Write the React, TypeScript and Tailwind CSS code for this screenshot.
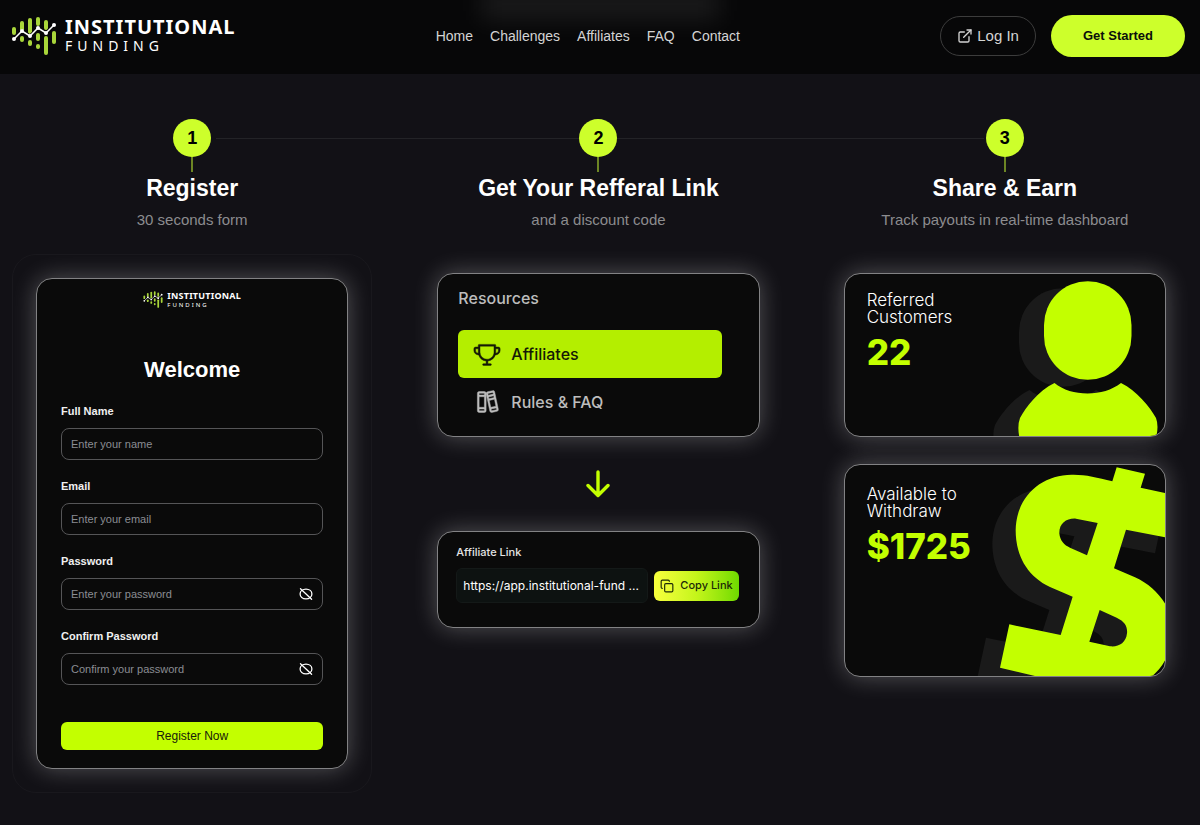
import { useState } from "react";
import type { ReactNode } from "react";
import { Copy, ExternalLink } from "lucide-react";
import { PiBooks, PiTrophy } from "react-icons/pi";
import { cx } from "class-variance-authority";

const navLinks = ["Home", "Challenges", "Affiliates", "FAQ", "Contact"];

const fields = [
  { id: "full-name", label: "Full Name", placeholder: "Enter your name", type: "text" },
  { id: "email", label: "Email", placeholder: "Enter your email", type: "email" },
  { id: "password", label: "Password", placeholder: "Enter your password", type: "password" },
  { id: "confirm-password", label: "Confirm Password", placeholder: "Confirm your password", type: "password" },
];

const bars = [
  { x: 3, y1: 14, y2: 18 },
  { x: 11, y1: 8, y2: 15 },
  { x: 11, y1: 23, y2: 25 },
  { x: 19, y1: 5, y2: 17 },
  { x: 19, y1: 27, y2: 29 },
  { x: 27, y1: 4, y2: 9 },
  { x: 27, y1: 20, y2: 24 },
  { x: 27, y1: 31, y2: 32 },
  { x: 35, y1: 7, y2: 13 },
  { x: 35, y1: 23, y2: 38 },
  { x: 43, y1: 18, y2: 27 },
];

const chart = [
  [3, 24],
  [11, 16],
  [19, 21],
  [27, 13],
  [35, 18],
  [43, 10],
];

function LogoMark({ className }: { className: string }) {
  return (
    <svg viewBox="0 0 46 42" className={className} fill="none" aria-hidden>
      {bars.map((b, i) => (
        <line key={i} x1={b.x} x2={b.x} y1={b.y1} y2={b.y2} stroke="#a9d63a" strokeWidth="4" strokeLinecap="round" />
      ))}
      <polyline points={chart.map((p) => p.join(",")).join(" ")} stroke="#0a0a0a" strokeWidth="3" />
      <polyline points={chart.map((p) => p.join(",")).join(" ")} stroke="#fff" strokeWidth="1.5" />
      {chart.map(([x, y]) => (
        <circle key={x} cx={x} cy={y} r="2" fill="#fff" />
      ))}
    </svg>
  );
}

function Logo({ small = false }: { small?: boolean }) {
  return (
    <a href="#" className={cx("flex items-center font-['Noto_Sans',sans-serif] text-white", small ? "gap-1" : "gap-2")}>
      <LogoMark className={small ? "h-[19px] w-5" : "h-[42px] w-[46px]"} />
      <span className="flex flex-col">
        <span
          className={cx(
            "font-bold",
            small ? "text-[9px] leading-[10px] tracking-wide" : "text-[20px] leading-[20px] tracking-wider",
          )}
        >
          INSTITUTIONAL
        </span>
        <span className={cx(small ? "text-[6px] leading-[8px] tracking-[2px]" : "text-[14px] leading-[18px] tracking-[5px]")}>
          FUNDING
        </span>
      </span>
    </a>
  );
}

function Header() {
  return (
    <header className="relative flex h-[74px] items-center justify-between overflow-hidden bg-[#070708] pb-0.5 pl-[11px] pr-[15px]">
      <div className="absolute -top-3 left-[40%] h-8 w-1/5 bg-white/8 blur-md" aria-hidden />
      <Logo />
      <nav className="relative flex gap-[17px] text-[14px] text-[#d4d4d4]">
        {navLinks.map((label) => (
          <a key={label} href="#">
            {label}
          </a>
        ))}
      </nav>
      <div className="flex items-center gap-[15px]">
        <a
          href="#"
          className="flex h-10 items-center gap-1 rounded-full border border-[#3c3c3c] px-4 text-[15px] text-[#d4d4d4]"
        >
          <ExternalLink className="h-4 w-4" strokeWidth={2} />
          Log In
        </a>
        <a href="#" className="flex h-[42px] items-center rounded-full bg-[#cdff2b] px-8 text-[13px] font-bold text-[#0a0f0a]">
          Get Started
        </a>
      </div>
    </header>
  );
}

function Step({ n, title, text, children }: { n: number; title: string; text: string; children: ReactNode }) {
  return (
    <section className="flex flex-col items-center">
      <span className="relative grid h-[38px] w-[38px] place-items-center rounded-full bg-[#cdff2b] text-[18px] font-bold text-black">
        {n}
      </span>
      <span className="h-[15px] w-0.5 bg-[#6d8624]" />
      <h2 className="text-[23px] font-bold leading-8 text-white">{title}</h2>
      <p className="mt-1 text-[15px] leading-6 text-[#8c8c8f]">{text}</p>
      {children}
    </section>
  );
}

function Panel({ className, children }: { className?: string; children: ReactNode }) {
  return (
    <div
      className={cx(
        "relative w-full overflow-hidden rounded-2xl border border-[#828284] bg-[#0a0a0a] shadow-[0_0_24px_rgba(255,255,255,0.28)]",
        className,
      )}
    >
      {children}
    </div>
  );
}

function HiddenIcon() {
  return (
    <svg viewBox="0 0 14 12" className="h-3 w-3.5" fill="none" stroke="currentColor" strokeWidth="1.3" strokeLinecap="round">
      <path d="M7 1.2c3.4 0 5.9 2.1 5.9 4.8s-2.5 4.8-5.9 4.8S1.1 8.7 1.1 6 3.6 1.2 7 1.2Z" />
      <path d="M1.5.8 12.6 11.2" />
    </svg>
  );
}

function RegisterForm() {
  const [visible, setVisible] = useState<Record<string, boolean>>({});

  return (
    <form className="flex flex-col px-6 pb-[18px] pt-[11px]" onSubmit={(e) => e.preventDefault()}>
      <div className="flex justify-center">
        <Logo small />
      </div>
      <h3 className="mt-[45px] text-center text-[22px] font-bold leading-8 text-white">Welcome</h3>
      <div className="mt-[17px] flex flex-col gap-[18px]">
        {fields.map((f) => (
          <div key={f.id}>
            <label htmlFor={f.id} className="block text-[11px] font-bold leading-4 text-[#f0f0f0]">
              {f.label}
            </label>
            <div className="relative mt-[9px]">
              <input
                id={f.id}
                type={visible[f.id] ? "text" : f.type}
                placeholder={f.placeholder}
                className="block h-8 w-full rounded-lg border border-[#555557] bg-transparent px-[9px] text-[11px] text-white placeholder:text-[#8b8d93]"
              />
              {f.type === "password" && (
                <button
                  type="button"
                  aria-label={`Show ${f.label}`}
                  onClick={() => setVisible({ ...visible, [f.id]: !visible[f.id] })}
                  className="absolute inset-y-0 right-2.5 text-white"
                >
                  <HiddenIcon />
                </button>
              )}
            </div>
          </div>
        ))}
      </div>
      <button type="submit" className="mt-[37px] h-7 rounded-md bg-[#c3ff00] text-[12px] text-[#17200a]">
        Register Now
      </button>
    </form>
  );
}

function Resources() {
  return (
    <Panel className="font-[Inter,sans-serif]">
      <div className="pb-2.5 pl-5 pr-[37px] pt-3 text-[16px] font-medium text-[#bdbdbd]">
        <h3 className="leading-6">Resources</h3>
        <a href="#" className="mt-5 flex h-12 items-center gap-2.5 rounded-md bg-[#b4ee00] pl-[15px] text-[#141a06]">
          <PiTrophy className="h-7 w-7 stroke-current stroke-4" />
          Affiliates
        </a>
        <a href="#" className="flex h-12 items-center gap-2.5 pl-[15px]">
          <PiBooks className="h-7 w-7 stroke-current stroke-4" />
          Rules &amp; FAQ
        </a>
      </div>
    </Panel>
  );
}

function AffiliateLink() {
  return (
    <Panel className="font-[Inter,sans-serif]">
      <div className="pb-6 pl-[18px] pr-5 pt-3">
        <label htmlFor="affiliate-link" className="block text-[11px] font-medium leading-4 text-[#e4e4e4]">
          Affiliate Link
        </label>
        <div className="mt-2 flex items-center gap-1.5">
          <input
            id="affiliate-link"
            readOnly
            value="https://app.institutional-fund ..."
            className="h-[35px] min-w-0 flex-1 rounded-md border border-[#141918] bg-[#0d1211] px-1.5 text-[12px] text-white"
          />
          <button
            type="button"
            className="flex h-[30px] items-center gap-1.5 rounded-md bg-linear-to-r from-[#f8ff3c] via-[#c4f51a] to-[#6edb00] px-1.5 text-[11px] font-medium text-[#1c2a08]"
          >
            <Copy className="h-3.5 w-3.5" />
            Copy Link
          </button>
        </div>
      </div>
    </Panel>
  );
}

const headPath = "M1044 325a43.75 43.75 0 0 1 87.5 0v11a43.75 43.75 0 0 1-87.5 0Z";
const bodyPath =
  "M1054.5 383C1063 390 1075 393.5 1087.5 393.5S1112 390 1121 383C1137 391 1150 407 1156 418Q1159 426 1156 438H1019.5Q1017 426 1020 418C1026 407 1038 391 1054.5 383Z";

function PersonArt() {
  return (
    <svg viewBox="986 273 180 164" className="absolute -right-px -top-px h-[164px] w-[180px]" aria-hidden>
      <g fill="#1a1a1a" transform="translate(-25 7)">
        <path d={headPath} />
        <path d={bodyPath} />
      </g>
      <g fill="#c3ff00">
        <path d={headPath} />
        <path d={bodyPath} />
      </g>
    </svg>
  );
}

const dollarPath =
  "M860 52L945 71L932 113L1072 144L1045 270L888 239L852 355L915 382C955 400 987 430 1008 465C1035 515 1035 580 1008 626C995 652 980 668 960 684C940 700 700 700 640 684L510 653L538 523L692 555L728 440L660 411C590 377 557 315 557 240C559 140 632 75 725 74C765 73 800 82 847 94ZM803 219L738 206C710 204 687 220 688 250C690 272 703 286 720 293L771 316ZM809 480L860 503C885 515 893 530 891 550C888 580 865 592 840 589L778 575Z";

function MoneyArt() {
  return (
    <svg viewBox="408 42 600 639" className="absolute -right-px -top-px h-[213px] w-[200px]" fillRule="evenodd" aria-hidden>
      <path d={dollarPath} fill="#1a1a1a" transform="translate(-70 40)" />
      <path d={dollarPath} fill="#c3ff00" />
    </svg>
  );
}

function StatCard({ lines, value, art, className }: { lines: string[]; value: string; art: ReactNode; className: string }) {
  return (
    <Panel className={cx("px-[22px] font-[Inter,sans-serif]", className)}>
      {art}
      <h3 className="relative text-[17px] font-light leading-[17px] text-white">
        {lines[0]}
        <br />
        {lines[1]}
      </h3>
      <p className="relative mt-1.5 text-[35px] font-extrabold leading-10 text-[#c3ff00]">{value}</p>
    </Panel>
  );
}

export default function App() {
  return (
    <div className="min-h-screen bg-[#121116] font-['Liberation_Sans',Arial,sans-serif]">
      <Header />
      <main className="relative grid grid-cols-3 gap-[46px] pb-8 pl-3 pr-[15px] pt-[45px]">
        <div className="absolute left-[18%] right-[18%] top-16 h-px bg-[#232327]" aria-hidden />

        <Step n={1} title="Register" text="30 seconds form">
          <div className="mt-[22px] w-full rounded-3xl border border-[#19181d] p-[23px]">
            <Panel>
              <RegisterForm />
            </Panel>
          </div>
        </Step>

        <Step n={2} title="Get Your Refferal Link" text="and a discount code">
          <div className="mt-[22px] flex w-full flex-col items-center px-[19px] pt-[19px]">
            <Resources />
            <svg
              viewBox="0 0 24 28"
              className="my-[33px] h-7 w-6"
              fill="none"
              stroke="#c3ff00"
              strokeWidth="3.4"
              strokeLinecap="round"
              strokeLinejoin="round"
              aria-hidden
            >
              <path d="M12 2v23M2 15.5l10 10 10-10" />
            </svg>
            <AffiliateLink />
          </div>
        </Step>

        <Step n={3} title="Share & Earn" text="Track payouts in real-time dashboard">
          <div className="mt-[22px] flex w-full flex-col gap-[27px] px-[19px] pt-[19px]">
            <StatCard lines={["Referred", "Customers"]} value="22" art={<PersonArt />} className="h-[164px] pt-[18px]" />
            <StatCard lines={["Available to", "Withdraw"]} value="$1725" art={<MoneyArt />} className="h-[213px] pt-[21px]" />
          </div>
        </Step>
      </main>
    </div>
  );
}
